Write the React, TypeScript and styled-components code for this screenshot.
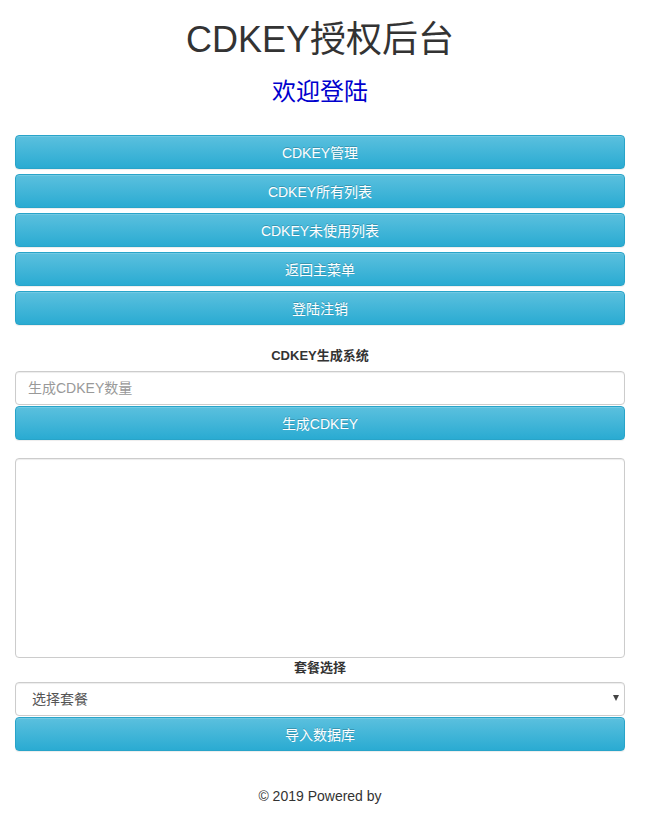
import styled, { createGlobalStyle } from 'styled-components';

const GlobalStyle = createGlobalStyle`
  body {
    margin: 0;
    background: #fff;
    font-family: "Liberation Sans", "Noto Sans CJK SC", Arial, sans-serif;
    font-size: 14px;
    color: #333;
  }
  * { box-sizing: border-box; }
`;

const Page = styled.div`
  width: 610px;
  margin-left: 15px;
  padding-top: 16px;
`;

const Title = styled.h1`
  margin: 0;
  text-align: center;
  font-size: 36px;
  font-weight: 400;
  line-height: 48px;
  color: #333;
`;

const Welcome = styled.h3`
  margin: 13px 0 0;
  text-align: center;
  font-size: 24px;
  font-weight: 400;
  line-height: 30px;
  color: #0000cd;
`;

const Menu = styled.div`
  display: flex;
  flex-direction: column;
  gap: 5px;
  margin-top: 28px;
`;

const Button = styled.button`
  display: block;
  width: 100%;
  height: 34px;
  padding: 0 12px;
  font-family: inherit;
  font-size: 14px;
  color: #fff;
  text-shadow: 0 -1px 0 rgba(0, 0, 0, 0.2);
  border: 1px solid #28a4c9;
  border-radius: 4px;
  background-image: linear-gradient(to bottom, #5bc0de 0, #2aabd2 100%);
  box-shadow: inset 0 1px 0 rgba(255, 255, 255, 0.15), 0 1px 1px rgba(0, 0, 0, 0.075);
  cursor: pointer;
`;

const Section = styled.div`
  margin-top: 21px;
`;

const Label = styled.div<{ $gap?: number }>`
  text-align: center;
  font-weight: 700;
  font-size: 13px;
  line-height: 20px;
  color: #333;
  margin-bottom: ${(p) => p.$gap ?? 5}px;
`;

const Input = styled.input`
  display: block;
  width: 100%;
  height: 34px;
  padding: 6px 12px;
  font-family: inherit;
  font-size: 14px;
  color: #555;
  border: 1px solid #ccc;
  border-radius: 4px;
  box-shadow: inset 0 1px 1px rgba(0, 0, 0, 0.075);
  margin-bottom: 1px;
  &::placeholder { color: #999; }
`;

const TextArea = styled.textarea`
  display: block;
  width: 100%;
  height: 200px;
  margin-top: 18px;
  border: 1px solid #ccc;
  border-radius: 4px;
  box-shadow: inset 0 1px 1px rgba(0, 0, 0, 0.075);
  resize: none;
`;

const SelectWrap = styled.div`
  position: relative;
  margin-bottom: 1px;
`;

const Select = styled.select`
  display: block;
  width: 100%;
  height: 34px;
  padding: 6px 12px 6px 16px;
  font-family: inherit;
  font-size: 14px;
  color: #555;
  background: #fff;
  border: 1px solid #ccc;
  border-radius: 4px;
  box-shadow: inset 0 1px 1px rgba(0, 0, 0, 0.075);
  appearance: none;
`;

const Caret = styled.span`
  position: absolute;
  right: 6px;
  top: 13px;
  width: 0;
  height: 0;
  border-left: 3.5px solid transparent;
  border-right: 3.5px solid transparent;
  border-top: 6px solid #444;
  pointer-events: none;
`;

const Footer = styled.footer`
  margin-top: 35px;
  text-align: center;
  font-size: 14px;
  color: #333;
  line-height: 20px;
`;

const menuItems = ['CDKEY管理', 'CDKEY所有列表', 'CDKEY未使用列表', '返回主菜单', '登陆注销'];

const App = () => {
  return (
    <>
      <GlobalStyle />
      <Page>
        <Title>CDKEY授权后台</Title>
        <Welcome>欢迎登陆</Welcome>

        <Menu>
          {menuItems.map((item) => (
            <Button key={item}>{item}</Button>
          ))}
        </Menu>

        <Section>
          <Label>CDKEY生成系统</Label>
          <Input placeholder="生成CDKEY数量" />
          <Button>生成CDKEY</Button>
        </Section>

        <TextArea />
        <Label $gap={4}>套餐选择</Label>
        <SelectWrap>
          <Select defaultValue="">
            <option value="">选择套餐</option>
          </Select>
          <Caret />
        </SelectWrap>
        <Button>导入数据库</Button>

        <Footer>© 2019 Powered by</Footer>
      </Page>
    </>
  );
};

export default App;
